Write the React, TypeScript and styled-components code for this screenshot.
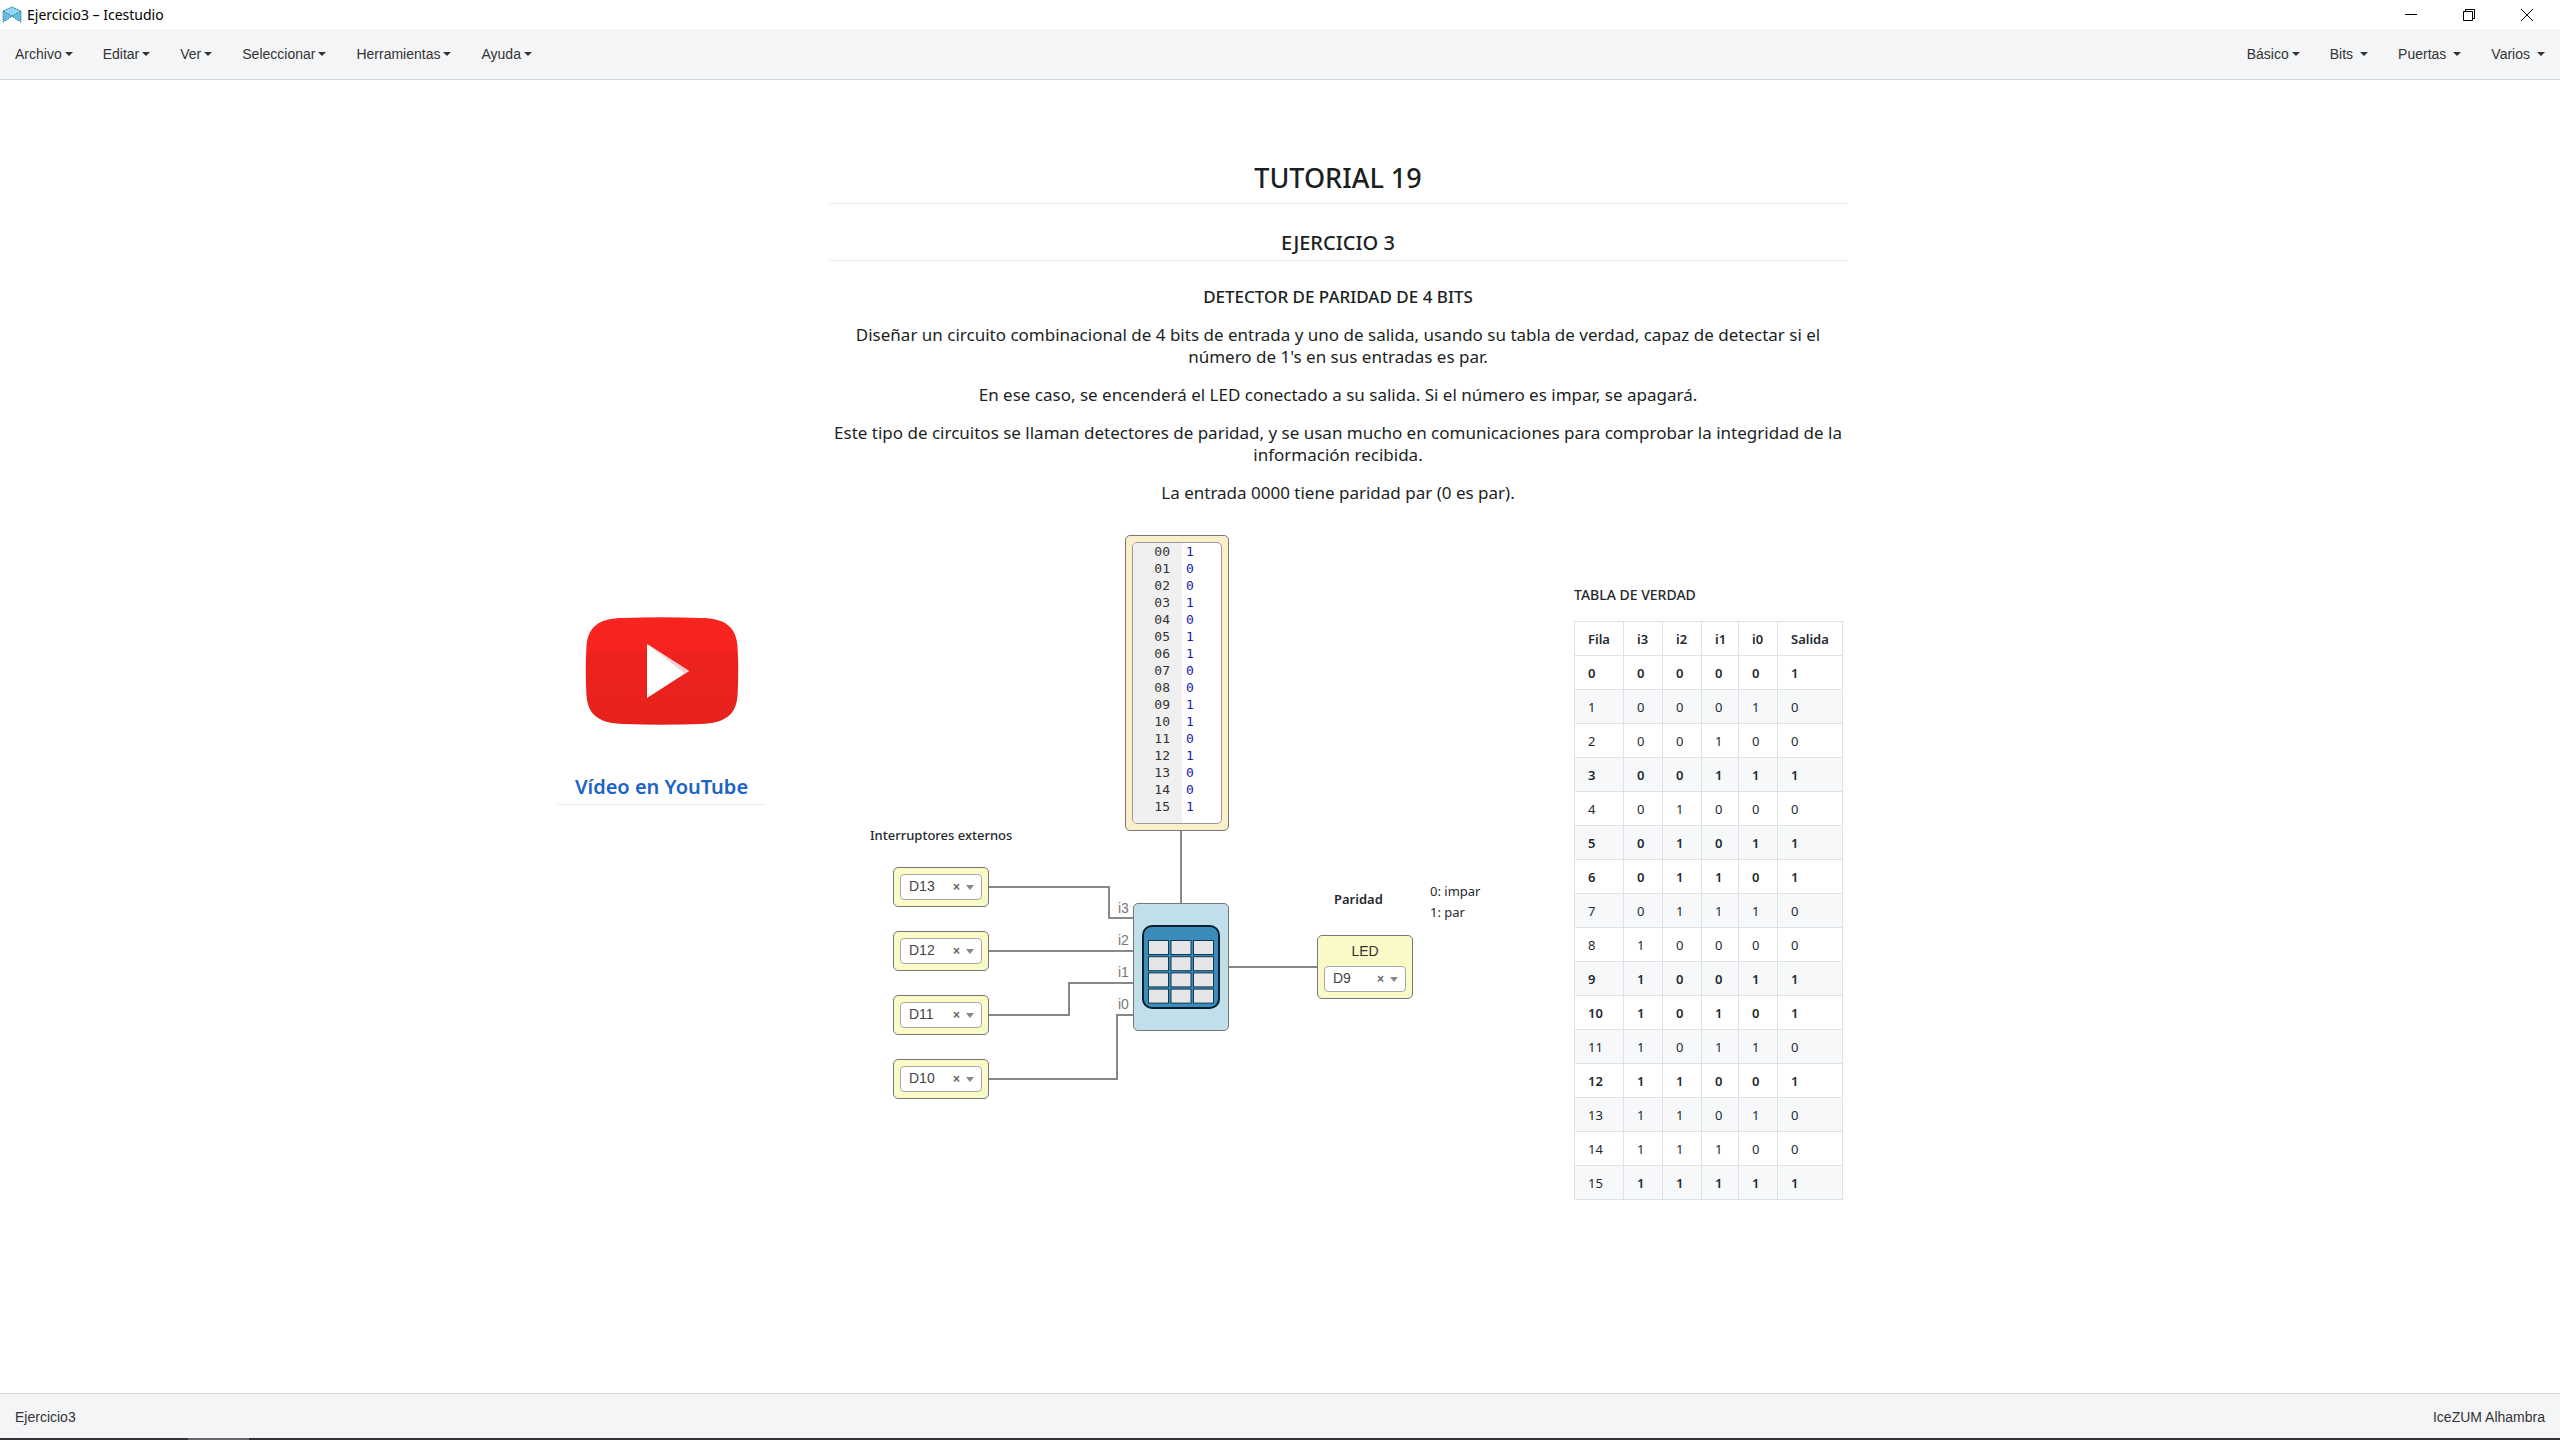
import React from "react";
import styled, { createGlobalStyle, css } from "styled-components";

const sans = '"Noto Sans", "Open Sans", sans-serif';
const ui = '"Liberation Sans", Arial, sans-serif';
const mono = '"DejaVu Sans Mono", monospace';

const GlobalStyle = createGlobalStyle`
  *, *::before, *::after { box-sizing: border-box; }
  body { margin: 0; background: #fff; font: 14px/20px ${ui}; color: #333; }
  button, select, textarea { font: inherit; color: inherit; }
  h1, h2, h3, p { margin: 0; }
`;

const Page = styled.div`
  display: flex;
  flex-direction: column;
  min-height: 100vh;
`;

/* ---- window title bar ---- */

const TitleBar = styled.header`
  display: flex;
  align-items: center;
  height: 29px;
  padding-left: 2px;
  color: #000;
  font-family: ${sans};
`;

const AppTitle = styled.span`
  flex: 1;
  margin-left: 5px;
`;

const WindowButton = styled.button`
  display: grid;
  place-items: center;
  width: 58px;
  height: 28px;
  padding: 0;
  border: 0;
  background: none;
`;

const WindowButtons = styled.div`
  display: flex;
  padding-right: 4px;
`;

/* ---- menus ---- */

const MenuBar = styled.nav`
  display: flex;
  justify-content: space-between;
  height: 51px;
  background: #f4f5f7;
  border-bottom: 1px solid #d3d6d9;
`;

const MenuGroup = styled.div`
  display: flex;
`;

const MenuButton = styled.button<{ $gap: number }>`
  display: flex;
  align-items: center;
  gap: ${(p) => p.$gap}px;
  padding: 0 15px;
  border: 0;
  background: none;
`;

const Caret = styled.span`
  border: 4px solid transparent;
  border-top-color: #333;
  border-bottom: 0;
`;

const SelectCaret = styled(Caret)`
  border-top: 5px solid #888;
`;

/* ---- design canvas ---- */

const Canvas = styled.main`
  position: relative;
  flex: 1;
  min-height: 1200px;
  background: #fff;
`;

const Wires = styled.svg`
  position: absolute;
  inset: 0;
  width: 100%;
  height: 100%;
  fill: none;
  stroke: #888;
  stroke-width: 2;
`;

type NodeProps = { $x: number; $y: number; $w?: number };

const Node = styled.section<NodeProps>`
  position: absolute;
  left: ${(p) => p.$x}px;
  top: ${(p) => p.$y}px;
  ${(p) => p.$w && css`width: ${p.$w}px;`}
`;

const Statement = styled(Node)`
  display: flex;
  flex-direction: column;
  gap: 16px;
  color: #1b1f23;
  font: 400 17px/22px ${sans};
  text-align: center;
`;

const Title = styled.h1`
  padding-bottom: 9px;
  border-bottom: 1px solid #eaecef;
  font: 500 27px/32px ${sans};
`;

const Subtitle = styled.h2`
  margin-top: 9px;
  padding-bottom: 3px;
  border-bottom: 1px solid #eaecef;
  font: 500 20px/28px ${sans};
`;

const Topic = styled.h3`
  margin-top: 9px;
  font: 500 17px/22px ${sans};
`;

const Paragraph = styled.p``;

const VideoNode = styled(Node)`
  display: flex;
  flex-direction: column;
  align-items: center;
  gap: 48px;
`;

const VideoTitle = styled.h2`
  align-self: stretch;
  padding-bottom: 3px;
  border-bottom: 1px solid #eaecef;
  font: 600 20px/28px ${sans};
  text-align: center;
`;

const VideoLink = styled.a`
  color: #1b63c6;
  text-decoration: none;
`;

const Note = styled(Node)<{ $weight?: number }>`
  color: #24292e;
  font: ${(p) => p.$weight ?? 400} 13px/21px ${sans};
  white-space: nowrap;
`;

const block = css`
  border: 1px solid #777;
  border-radius: 5px;
`;

const MemoryBlock = styled(Node)`
  ${block}
  height: 296px;
  padding: 6px;
  background: #faeecb;
`;

const Editor = styled.div`
  display: flex;
  height: 100%;
  overflow: hidden;
  border: 1px solid #999;
  border-radius: 5px;
  background: #fff;
  font: 13px/17px ${mono};
`;

const Gutter = styled.div`
  width: 49px;
  padding-right: 12px;
  background: #f0f0f0;
  color: #333;
  text-align: right;
`;

const Values = styled.textarea`
  flex: 1;
  min-width: 0;
  padding: 0 4px;
  border: 0;
  resize: none;
  overflow: hidden;
  background: none;
  color: #1a1aa8;
`;

const PinBlock = styled(Node)`
  ${block}
  display: flex;
  flex-direction: column;
  padding: 6px;
  background: #fafac8;
`;

const PinTitle = styled.label`
  height: 24px;
  line-height: 18px;
  text-align: center;
`;

const PinField = styled.div`
  display: flex;
  align-items: center;
  height: 26px;
  padding-right: 7px;
  border: 1px solid #aaa;
  border-radius: 4px;
  background: #fff;
`;

const PinSelect = styled.select`
  flex: 1;
  min-width: 0;
  height: 24px;
  padding: 0 0 2px 8px;
  border: 0;
  appearance: none;
  background: none;
  color: #444;
`;

const ClearButton = styled.button`
  padding: 0;
  margin-right: 6px;
  border: 0;
  background: none;
  color: #666;
  font-weight: bold;
  font-size: 12px;
`;

const TableBlock = styled(Node)`
  ${block}
  display: grid;
  place-items: center;
  height: 128px;
  background: #c1dfea;
`;

const PortLabel = styled(Node)`
  color: #777;
  line-height: 16px;
`;

const TruthTable = styled.table`
  border-collapse: collapse;
  table-layout: fixed;
  color: #24292e;
  font: 13px/20px ${sans};
`;

const Caption = styled.caption`
  padding-bottom: 16px;
  font: 500 14px/21px ${sans};
  text-align: left;
`;

const Column = styled.col<{ $w: number }>`
  width: ${(p) => p.$w}px;
`;

const Row = styled.tr`
  height: 34px;
  background: #fff;
  &:nth-child(even) { background: #f6f8fa; }
`;

const HeadCell = styled.th`
  padding: 0 0 0 13px;
  border: 1px solid #dfe2e5;
  font-weight: 600;
  text-align: left;
`;

const Cell = styled.td<{ $strong: boolean }>`
  padding: 0 0 0 13px;
  border: 1px solid #dfe2e5;
  font-weight: ${(p) => (p.$strong ? 600 : 400)};
`;

/* ---- footer ---- */

const StatusBar = styled.footer`
  display: flex;
  align-items: center;
  justify-content: space-between;
  height: 45px;
  padding: 2px 15px 0;
  background: #f4f5f7;
  border-top: 1px solid #d3d6d9;
`;

const TaskStrip = styled.div`
  height: 2px;
  padding-left: 188px;
  background: #333438;
`;

const ActiveTask = styled.div`
  width: 61px;
  height: 2px;
  background: #66676a;
`;

const leftMenus = ["Archivo", "Editar", "Ver", "Seleccionar", "Herramientas", "Ayuda"];
const rightMenus = ["Básico", "Bits", "Puertas", "Varios"];
const inputs = ["D13", "D12", "D11", "D10"];
const ports = ["i3", "i2", "i1", "i0"];
const memory = [1, 0, 0, 1, 0, 1, 1, 0, 0, 1, 1, 0, 1, 0, 0, 1];
const columns = [49, 39, 39, 37, 39, 65];

function Pin({ x, y, pin, title }: { x: number; y: number; pin: string; title?: string }) {
  const id = `pin-${pin}`;
  return (
    <PinBlock $x={x} $y={y} $w={96}>
      {title && <PinTitle htmlFor={id}>{title}</PinTitle>}
      <PinField>
        <PinSelect id={id} aria-label={title ?? pin} defaultValue={pin}>
          <option>{pin}</option>
        </PinSelect>
        <ClearButton type="button" aria-label={`Quitar ${pin}`}>×</ClearButton>
        <SelectCaret />
      </PinField>
    </PinBlock>
  );
}

function Logo() {
  return (
    <svg width="20" height="18" viewBox="0 0 20 18" aria-hidden="true">
      <path d="M1 5 10 1l9 4v11l-5-3-4-3-4 3-5 3z" fill="#7cccec" />
      <path d="M1 5 10 1l9 4-9 5z" fill="#8fd8f2" />
      <path d="M1 5v11l5-3 4-3zM19 5v11l-5-3-4-3z" fill="#69bde0" />
      <path d="M1 5 10 1l9 4v11l-5-3-4-3-4 3-5 3zM1 5l9 5 9-5" fill="none" stroke="#397f9c" strokeDasharray="2 1" />
    </svg>
  );
}

function YouTubeLogo() {
  return (
    <svg width="154" height="108" viewBox="0 0 154 108" role="img" aria-label="YouTube">
      <defs>
        <linearGradient id="red" x2="0" y2="1">
          <stop offset="0" stopColor="#f8241f" />
          <stop offset=".3" stopColor="#f6231f" />
          <stop offset=".34" stopColor="#ee221f" />
          <stop offset="1" stopColor="#e6221d" />
        </linearGradient>
      </defs>
      <path d="M38 1Q77-.5 116 1C140 1 151 10 152.500 29Q154 54 152.500 79C151 98 140 106 116 107Q77 108.500 38 107C14 106 3 98 1.500 79Q0 54 1.500 29C3 10 14 1 38 1Z" fill="url(#red)" />
      <path d="M62 27v54l42-27z" fill="#fff" />
      <path d="M62 27 100 56.500l4-2.500z" fill="#f3d0d0" />
    </svg>
  );
}

function TableIcon() {
  return (
    <svg width="78" height="84" viewBox="0 0 78 84" aria-hidden="true">
      <rect x="1" y="1" width="76" height="82" rx="9" fill="#3b8cb8" stroke="#05202f" strokeWidth="2" />
      {[0, 1, 2, 3].map((r) =>
        [0, 1, 2].map((c) => (
          <rect key={`${r}${c}`} x={6.5 + c * 22.5} y={15.5 + r * 16.2} width="20" height="14" fill="#e6e6e6" stroke="#0c3a52" strokeWidth="1" />
        ))
      )}
    </svg>
  );
}

export default function App() {
  return (
    <Page>
      <GlobalStyle />
      <TitleBar>
        <Logo />
        <AppTitle>Ejercicio3 – Icestudio</AppTitle>
        <WindowButtons>
          <WindowButton aria-label="Minimizar">
            <svg width="12" height="12"><path d="M0 5.500h12" stroke="#000" /></svg>
          </WindowButton>
          <WindowButton aria-label="Restaurar">
            <svg width="12" height="12"><path d="M.5 2.500h9v9h-9zM2.500 2.500v-2h9v9h-2" fill="none" stroke="#000" /></svg>
          </WindowButton>
          <WindowButton aria-label="Cerrar">
            <svg width="12" height="12"><path d="m0 0 12 12M12 0 0 12" stroke="#000" /></svg>
          </WindowButton>
        </WindowButtons>
      </TitleBar>
      <MenuBar>
        <MenuGroup>
          {leftMenus.map((m) => (
            <MenuButton key={m} $gap={3}>{m}<Caret /></MenuButton>
          ))}
        </MenuGroup>
        <MenuGroup>
          {rightMenus.map((m, i) => (
            <MenuButton key={m} $gap={i ? 7 : 3}>{m}<Caret /></MenuButton>
          ))}
        </MenuGroup>
      </MenuBar>

      <Canvas>
        <Wires aria-hidden="true">
          <path d="M1181 751V823M989 807H1109V838H1133M989 871H1133M989 935H1069V903H1133M989 999H1117V935H1133M1229 887H1317" />
        </Wires>

        <Statement $x={829} $y={82} $w={1018}>
          <Title>TUTORIAL 19</Title>
          <Subtitle>EJERCICIO 3</Subtitle>
          <Topic>DETECTOR DE PARIDAD DE 4 BITS</Topic>
          <Paragraph>
            Diseñar un circuito combinacional de 4 bits de entrada y uno de salida, usando su tabla de verdad, capaz de detectar si el
            <br />
            número de 1's en sus entradas es par.
          </Paragraph>
          <Paragraph>
            En ese caso, se encenderá el LED conectado a su salida. Si el número es impar, se apagará.
          </Paragraph>
          <Paragraph>
            Este tipo de circuitos se llaman detectores de paridad, y se usan mucho en comunicaciones para comprobar la integridad de la
            <br />
            información recibida.
          </Paragraph>
          <Paragraph>La entrada 0000 tiene paridad par (0 es par).</Paragraph>
        </Statement>

        <VideoNode $x={557} $y={537} $w={209}>
          <YouTubeLogo />
          <VideoTitle>
            <VideoLink href="#video">Vídeo en YouTube</VideoLink>
          </VideoTitle>
        </VideoNode>

        <MemoryBlock $x={1125} $y={455} $w={104}>
          <Editor>
            <Gutter>
              {memory.map((_, i) => (
                <div key={i}>{String(i).padStart(2, "0")}</div>
              ))}
            </Gutter>
            <Values aria-label="Valores de salida" defaultValue={memory.join("\n")} spellCheck={false} />
          </Editor>
        </MemoryBlock>

        <Note $x={870} $y={745} $weight={500}>Interruptores externos</Note>
        {inputs.map((pin, i) => (
          <Pin key={pin} x={893} y={787 + i * 64} pin={pin} />
        ))}

        {ports.map((port, i) => (
          <PortLabel key={port} $x={1118} $y={820 + i * 32}>{port}</PortLabel>
        ))}
        <TableBlock $x={1133} $y={823} $w={96}>
          <TableIcon />
        </TableBlock>

        <Note $x={1334} $y={809} $weight={600}>Paridad</Note>
        <Note $x={1430} $y={801}>
          <p>0: impar</p>
          <p>1: par</p>
        </Note>
        <Pin x={1317} y={855} pin="D9" title="LED" />

        <Node $x={1574} $y={504} $w={269}>
          <TruthTable>
            <Caption>TABLA DE VERDAD</Caption>
            <colgroup>
              {columns.map((w, i) => <Column key={i} $w={w} />)}
            </colgroup>
            <thead>
              <Row>
                {["Fila", ...ports, "Salida"].map((h) => (
                  <HeadCell key={h} scope="col">{h}</HeadCell>
                ))}
              </Row>
            </thead>
            <tbody>
              {memory.map((out, n) => (
                <Row key={n}>
                  {[n, (n >> 3) & 1, (n >> 2) & 1, (n >> 1) & 1, n & 1, out].map((v, c) => (
                    <Cell key={c} $strong={out === 1 && !(n === 15 && c === 0)}>{v}</Cell>
                  ))}
                </Row>
              ))}
            </tbody>
          </TruthTable>
        </Node>
      </Canvas>

      <StatusBar>
        <span>Ejercicio3</span>
        <span>IceZUM Alhambra</span>
      </StatusBar>
      <TaskStrip>
        <ActiveTask />
      </TaskStrip>
    </Page>
  );
}
